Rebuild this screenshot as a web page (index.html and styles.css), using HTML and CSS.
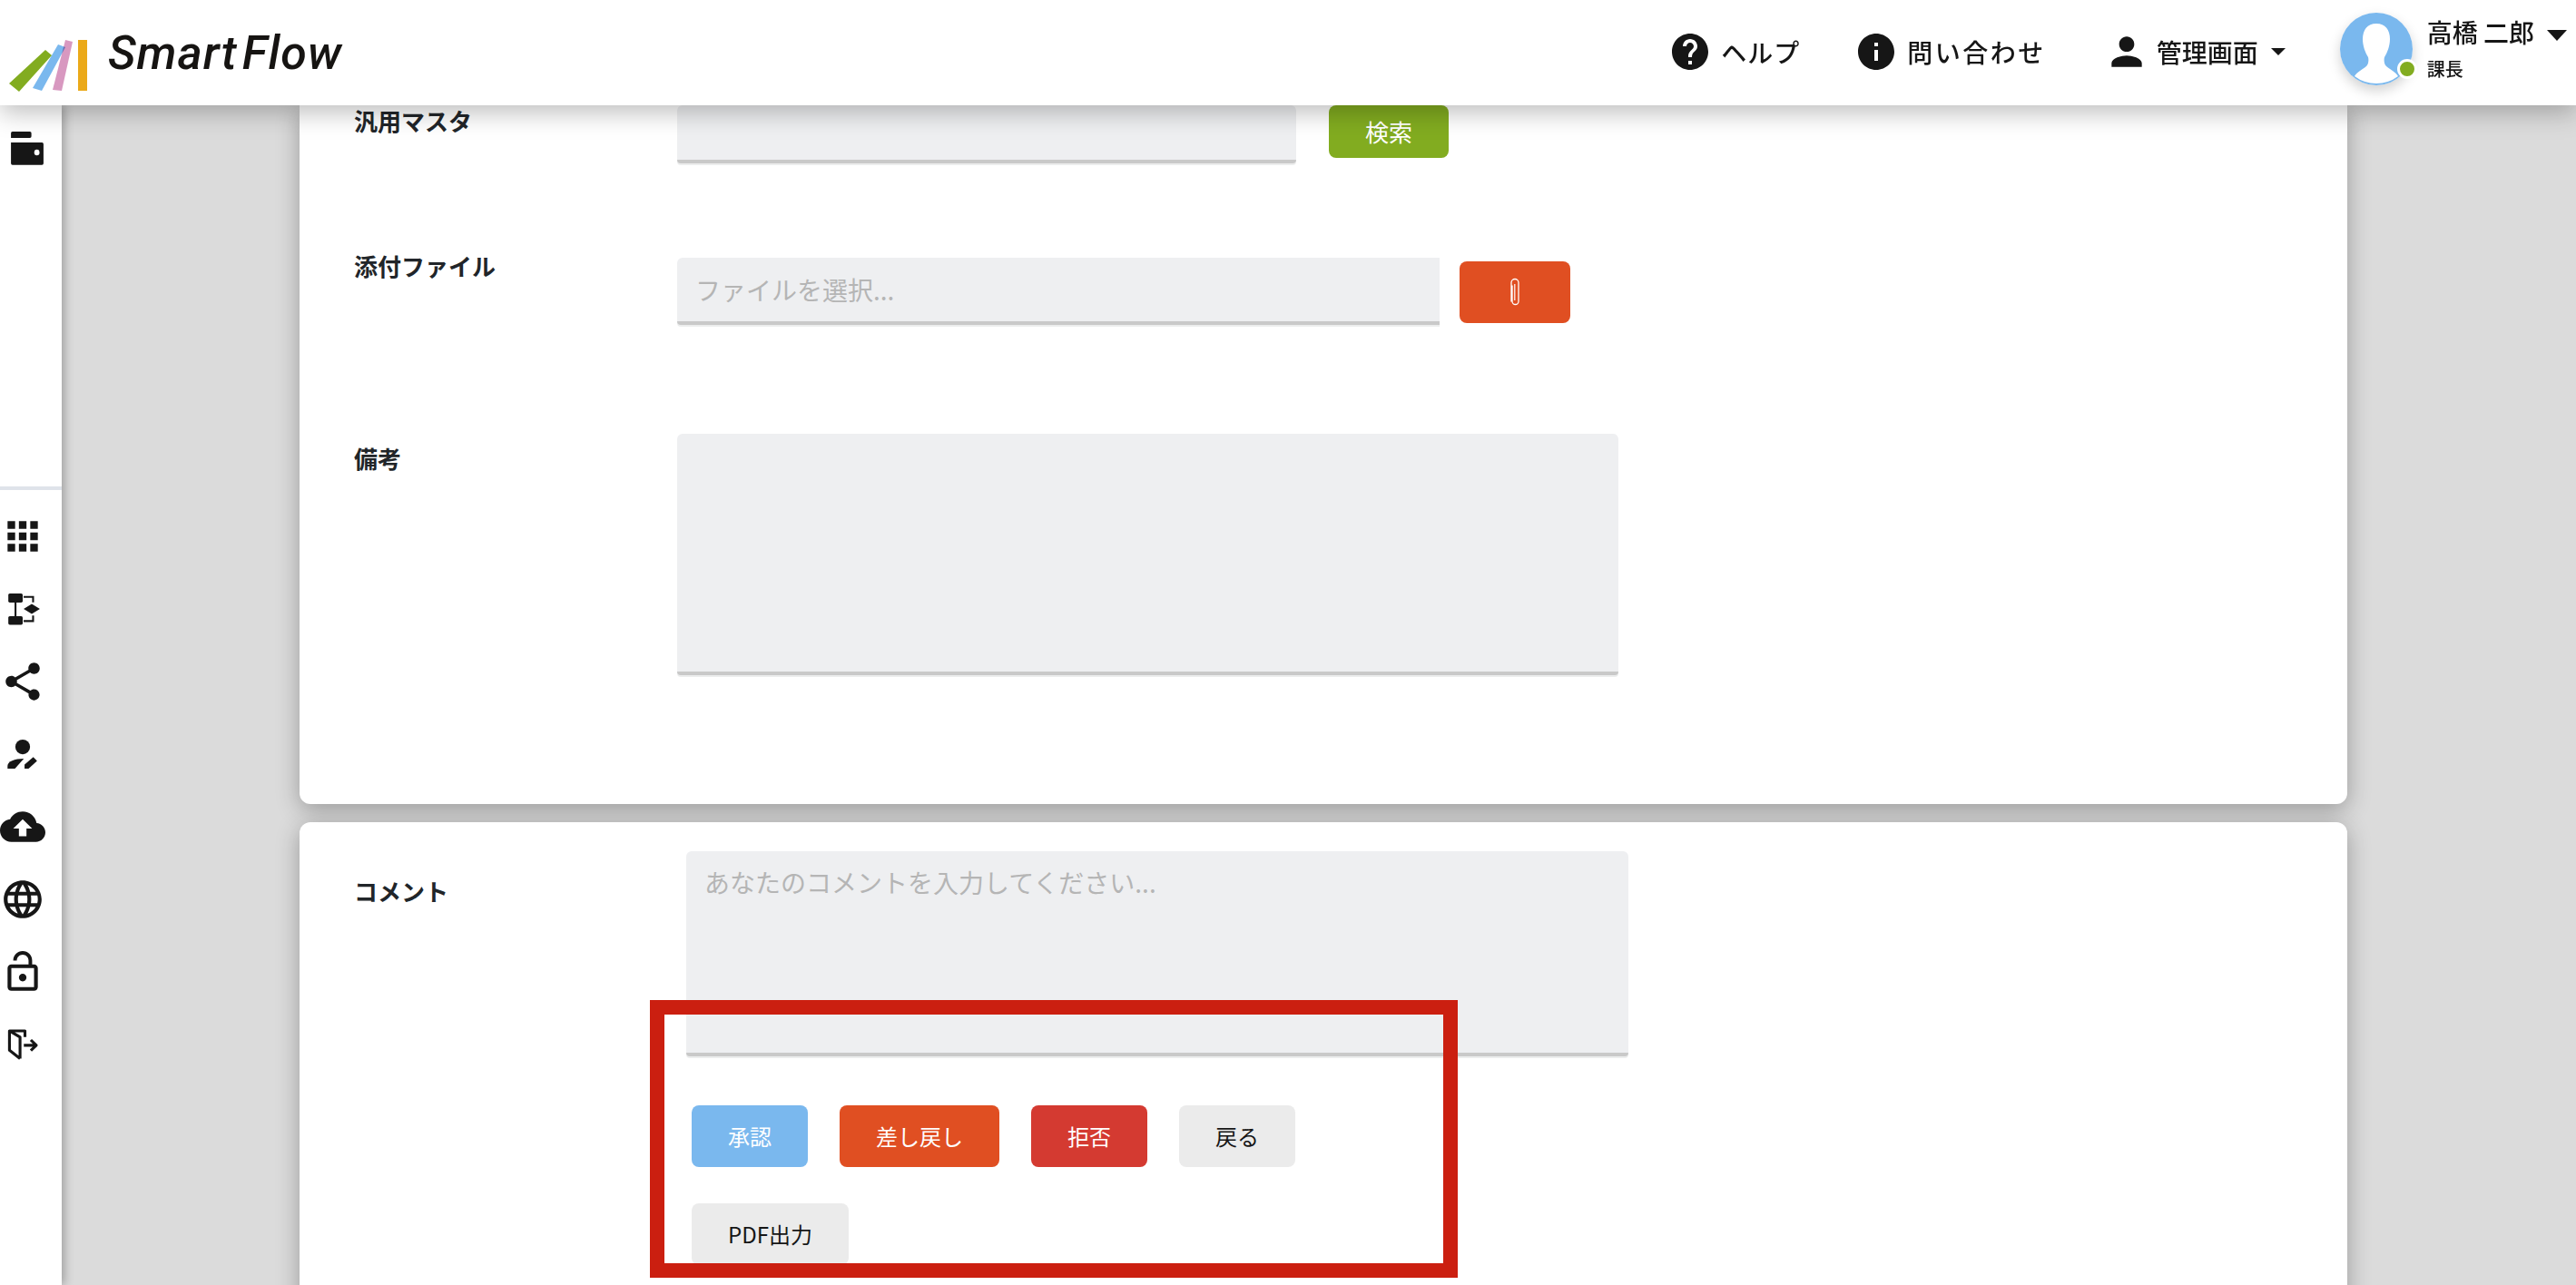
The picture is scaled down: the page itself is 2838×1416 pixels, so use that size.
FILE: index.html
```html
<!DOCTYPE html>
<html lang="en">
<head>
    <meta charset="UTF-8">
    <meta name="viewport" content="width=device-width, initial-scale=1.0">
    <title>SmartFlow</title>
    <link rel="stylesheet" href="styles.css">
</head>
<body>
    <header class="topbar">
        <div class="brand">
            <svg class="brand-mark" viewBox="0 0 104 90">
                <path class="bar" fill="#eba919" d="M86 24h10v56H86z"/>
                <path class="bar" fill="#d898c0" d="M72 24l8 2-12 54-10-1z"/>
                <path class="bar" fill="#7ab8ee" d="M64 29l8 3-26 48-10-3z"/>
                <path class="bar" fill="#82ac20" d="M50 35l7 6-36 40-11-9z"/>
            </svg>
            <span class="brand-name">Smart<span class="brand-gap">Flow</span></span>
        </div>
        <nav class="topnav">
            <a class="nav-item nav-help">
                <svg class="nav-icon" viewBox="0 0 24 24"><path d="M12 2C6.48 2 2 6.48 2 12s4.48 10 10 10 10-4.48 10-10S17.52 2 12 2zm1 17h-2v-2h2v2zm2.07-7.75l-.9.92C13.45 12.9 13 13.5 13 15h-2v-.5c0-1.1.45-2.1 1.17-2.83l1.24-1.26c.37-.36.59-.86.59-1.41 0-1.1-.9-2-2-2s-2 .9-2 2H8c0-2.21 1.79-4 4-4s4 1.79 4 4c0 .88-.36 1.68-.93 2.25z"/></svg>
                ヘルプ
            </a>
            <a class="nav-item nav-contact">
                <svg class="nav-icon" viewBox="0 0 24 24"><path d="M12 2C6.48 2 2 6.48 2 12s4.48 10 10 10 10-4.48 10-10S17.52 2 12 2zm1 15h-2v-6h2v6zm0-8h-2V7h2v2z"/></svg>
                問い合わせ
            </a>
            <a class="nav-item nav-admin">
                <svg class="nav-icon" viewBox="0 0 24 24"><path d="M12 12c2.21 0 4-1.79 4-4s-1.79-4-4-4-4 1.79-4 4 1.79 4 4 4zm0 2c-2.67 0-8 1.34-8 4v2h16v-2c0-2.66-5.33-4-8-4z"/></svg>
                管理画面
                <span class="caret"></span>
            </a>
            <div class="profile">
                <div class="avatar">
                    <svg viewBox="0 0 80 80"><circle cx="40" cy="40" r="40" fill="#7ab8ee"/><path fill="#fff" d="M40 12c-10 0-15 7-15 17 0 8 3 15 6 20 1 4 0 8-2 10-5 4-10 6-13 11a40 40 0 0 0 48 0c-3-5-8-7-13-11-2-2-3-6-2-10 3-5 6-12 6-20 0-10-5-17-15-17z"/></svg>
                    <span class="status"></span>
                </div>
                <div class="who">
                    <div class="who-name">高橋 二郎<span class="caret caret-large"></span></div>
                    <div class="who-role">課長</div>
                </div>
            </div>
        </nav>
    </header>

    <div class="main">
        <aside class="sidebar">
            <svg class="side-icon wallet" viewBox="0 0 24 24"><path d="M6.6 3.4h9.2a.8.8 0 0 1 .8.8v1.7a.8.8 0 0 1-.8.8H5.8V4.2a.8.8 0 0 1 .8-.8zM5.8 9.1h16.4a.8.8 0 0 1 .8.8v10.3a.8.8 0 0 1-.8.8H6.6a.8.8 0 0 1-.8-.8z"/><ellipse cx="19.5" cy="14.4" rx="1.4" ry="1.6" fill="#fff"/></svg>
            <div class="side-rule"></div>
            <div class="side-list">
                <svg class="side-icon" viewBox="0 0 24 24"><path d="M4 8h4V4H4v4zm6 12h4v-4h-4v4zm-6 0h4v-4H4v4zm0-6h4v-4H4v4zm6 0h4v-4h-4v4zm6-10v4h4V4h-4zm-6 4h4V4h-4v4zm6 6h4v-4h-4v4zm0 6h4v-4h-4v4z"/></svg>
                <svg class="side-icon" viewBox="0 0 24 24"><rect x="4.4" y="3.8" width="7.6" height="4.8" rx=".8"/><rect x="4.4" y="15.8" width="7.6" height="4.6" rx=".8"/><path d="M7.7 8.6h1v7.2h-1zM12.5 12l4.3-2.6 4.3 2.6-4.3 2.6z"/><path d="M12.5 5.6h5v2.9M12.5 18.4h5v-2.9" fill="none" stroke="#161616"/></svg>
                <svg class="side-icon" viewBox="0 0 24 24"><path d="M18 16.08c-.76 0-1.44.3-1.96.77L8.91 12.7c.05-.23.09-.46.09-.7s-.04-.47-.09-.7l7.05-4.11c.54.5 1.25.81 2.04.81 1.66 0 3-1.34 3-3s-1.34-3-3-3-3 1.34-3 3c0 .24.04.47.09.7L8.04 9.81C7.5 9.31 6.79 9 6 9c-1.66 0-3 1.34-3 3s1.34 3 3 3c.79 0 1.5-.31 2.04-.81l7.12 4.16c-.05.21-.08.43-.08.65 0 1.61 1.31 2.92 2.92 2.92s2.92-1.31 2.92-2.92-1.31-2.92-2.92-2.92z"/></svg>
                <svg class="side-icon" viewBox="0 0 24 24"><circle cx="12" cy="8.2" r="3.9"/><path d="M4 19.7v-1.5c0-2.3 3.6-3.8 8.6-3.8l-4.7 5.3z"/><path d="M13 19.7v-2.2l4.6-3.9 2 2-4.5 4.1z"/></svg>
                <svg class="side-icon" viewBox="0 0 24 24"><path d="M19.35 10.04C18.67 6.59 15.64 4 12 4 9.11 4 6.6 5.64 5.35 8.04 2.34 8.36 0 10.91 0 14c0 3.31 2.69 6 6 6h13c2.76 0 5-2.24 5-5 0-2.64-2.05-4.78-4.65-4.96zM14 13v4h-4v-4H7l5-5 5 5h-3z"/></svg>
                <svg class="side-icon" viewBox="0 0 24 24"><path d="M11.99 2C6.47 2 2 6.48 2 12s4.47 10 9.99 10C17.52 22 22 17.52 22 12S17.52 2 11.99 2zm6.93 6h-2.95c-.32-1.25-.78-2.45-1.38-3.56 1.84.63 3.37 1.91 4.33 3.56zM12 4.04c.83 1.2 1.48 2.53 1.91 3.96h-3.82c.43-1.43 1.08-2.76 1.91-3.96zM4.26 14C4.1 13.36 4 12.69 4 12s.1-1.36.26-2h3.38c-.08.66-.14 1.32-.14 2 0 .68.06 1.34.14 2H4.26zm.82 2h2.95c.32 1.25.78 2.45 1.38 3.56-1.84-.63-3.37-1.9-4.33-3.56zm2.95-8H5.08c.96-1.66 2.49-2.93 4.33-3.56C8.81 5.55 8.35 6.75 8.03 8zM12 19.96c-.83-1.2-1.48-2.53-1.91-3.96h3.82c-.43 1.43-1.08 2.76-1.91 3.96zM14.34 14H9.66c-.09-.66-.16-1.32-.16-2 0-.68.07-1.35.16-2h4.68c.09.65.16 1.32.16 2 0 .68-.07 1.34-.16 2zm.25 5.56c.6-1.11 1.06-2.31 1.38-3.56h2.95c-.96 1.65-2.49 2.93-4.33 3.56zM16.36 14c.08-.66.14-1.32.14-2 0-.68-.06-1.34-.14-2h3.38c.16.64.26 1.31.26 2s-.1 1.36-.26 2h-3.38z"/></svg>
                <svg class="side-icon" viewBox="0 0 24 24"><path d="M12 17c1.1 0 2-.9 2-2s-.9-2-2-2-2 .9-2 2 .9 2 2 2zm6-9h-1V6c0-2.76-2.24-5-5-5S7 3.24 7 6h1.9c0-1.71 1.39-3.1 3.1-3.1 1.71 0 3.1 1.39 3.1 3.1v2H6c-1.1 0-2 .9-2 2v10c0 1.1.9 2 2 2h12c1.1 0 2-.9 2-2V10c0-1.1-.9-2-2-2zm0 12H6V10h12v10z"/></svg>
                <svg class="side-icon" viewBox="0 0 24 24"><path d="M10.6 19.4L5 15V4.8h8.2V8M5.2 4.9l5.4 3.2v11.3M12.6 12.4h6.4M16.3 9.6l2.9 2.8-2.9 2.8" fill="none" stroke="#161616" stroke-width="1.5" stroke-linejoin="round"/></svg>
            </div>
        </aside>

        <main class="content">
            <section class="card card-form">
                <div class="row row-master">
                    <label class="field-label">汎用マスタ</label>
                    <div class="field-line">
                        <input class="text-field master-field" type="text">
                        <button class="btn btn-search">検索</button>
                    </div>
                </div>
                <div class="row row-file">
                    <label class="field-label">添付ファイル</label>
                    <div class="field-line">
                        <input class="text-field file-field" type="text" placeholder="ファイルを選択...">
                        <button class="btn btn-clip">
                            <svg viewBox="0 0 16 34" width="16" height="34"><path d="M4.5 9v17.5a3.5 3.5 0 0 0 7 0V6a4 4 0 0 0-8 0v21" fill="none" stroke="#fff" stroke-width="1.3" transform="translate(.5 .5)"/><path d="M7.8 8v18" stroke="#fff" stroke-width="1.2"/></svg>
                        </button>
                    </div>
                </div>
                <div class="row row-note">
                    <label class="field-label">備考</label>
                    <textarea class="text-field note-field"></textarea>
                </div>
            </section>

            <section class="card card-comment">
                <div class="row-comment">
                    <label class="field-label">コメント</label>
                    <div class="comment-body">
                        <textarea class="text-field comment-field" placeholder="あなたのコメントを入力してください..."></textarea>
                        <div class="actions">
                            <button class="btn btn-blue">承認</button>
                            <button class="btn btn-orange">差し戻し</button>
                            <button class="btn btn-red">拒否</button>
                            <button class="btn btn-grey">戻る</button>
                            <button class="btn btn-grey">PDF出力</button>
                        </div>
                    </div>
                </div>
            </section>
        </main>
    </div>

    <!-- annotation drawn over the screen -->
    <div class="callout"></div>
</body>
</html>
```

FILE: styles.css
```css
* {
    box-sizing: border-box;
}

html, body {
    margin: 0;
    height: 1416px;
    overflow: hidden;
}

body {
    position: relative;
    background: #dbdbdb;
    color: #161616;
    font-family: "Noto Sans CJK JP", "Noto Sans", sans-serif;
}

/* top bar */
.topbar {
    position: relative;
    z-index: 3;
    display: flex;
    align-items: center;
    justify-content: space-between;
    height: 116px;
    background: #fff;
    box-shadow: 0 8px 26px rgba(0, 0, 0, .26);
}

.brand {
    display: flex;
    align-items: center;
    height: 100%;
}

.brand-mark {
    width: 104px;
    height: 90px;
    margin-top: 14px;
    flex-shrink: 0;
}

.bar {
    stroke-linejoin: round;
    mix-blend-mode: multiply;
}

.brand-name {
    margin-left: 15px;
    font-family: "Roboto", sans-serif;
    font-size: 52px;
    font-style: italic;
    font-weight: 500;
    letter-spacing: 1px;
    color: #161412;
}

.brand-gap {
    margin-left: 5px;
}

.topnav {
    display: flex;
    align-items: center;
    height: 100%;
}

.nav-item {
    display: flex;
    align-items: center;
    font-size: 28px;
    font-weight: 500;
    letter-spacing: 1px;
    line-height: 1;
    margin-top: -2px;
}

.nav-icon {
    width: 48px;
    height: 48px;
    margin-right: 10px;
    fill: #161616;
}

.nav-help {
    margin-right: 60px;
}

.nav-contact {
    margin-right: 64px;
    letter-spacing: 2.5px;
}

.nav-admin {
    letter-spacing: 0;
    margin-right: 60px;
}

.nav-admin .nav-icon {
    width: 50px;
    height: 50px;
    margin-right: 8px;
}

.caret {
    width: 0;
    height: 0;
    margin-left: 14px;
    border-left: 8px solid transparent;
    border-right: 8px solid transparent;
    border-top: 8px solid #161616;
}

.caret-large {
    display: inline-block;
    margin-left: 14px;
    vertical-align: middle;
    border-left-width: 11px;
    border-right-width: 11px;
    border-top-width: 12px;
}

.profile {
    display: flex;
    align-items: flex-start;
    height: 100%;
    padding-right: 10px;
}

.avatar {
    position: relative;
    width: 80px;
    height: 80px;
    margin-top: 14px;
    margin-right: 16px;
    border-radius: 50%;
    box-shadow: 0 6px 14px rgba(0, 0, 0, .18);
}

.avatar svg {
    display: block;
}

.status {
    position: absolute;
    left: 63px;
    top: 51px;
    width: 22px;
    height: 22px;
    border: 3px solid #fff;
    border-radius: 50%;
    background: #82ac20;
}

.who-name {
    margin-top: 14px;
    font-size: 28px;
    font-weight: 500;
    line-height: 42px;
    white-space: nowrap;
}

.who-role {
    margin-top: 5px;
    font-size: 20px;
    font-weight: 500;
    line-height: 30px;
}

/* left rail */
.main {
    display: flex;
    height: 1300px;
}

.sidebar {
    position: relative;
    z-index: 2;
    width: 68px;
    flex-shrink: 0;
    padding-top: 22px;
    background: #fff;
    box-shadow: 3px 0 10px rgba(0, 0, 0, .28);
}

.side-icon {
    display: block;
    width: 50px;
    height: 50px;
    fill: #161616;
}

.side-rule {
    height: 4px;
    margin-top: 348px;
    background: #dfe3ea;
}

.side-list {
    display: flex;
    flex-direction: column;
    gap: 30px;
    margin-top: 26px;
}

/* cards */
.content {
    flex: 1;
    min-width: 0;
    height: 100%;
    overflow: hidden;
    padding-left: 262px;
}

.card {
    width: 2256px;
    padding-left: 60px;
    background: #fff;
    border-radius: 12px;
    box-shadow: 0 6px 26px rgba(0, 0, 0, .3);
}

.card-form {
    height: 770px;
    border-radius: 0 0 12px 12px;
}

.card-comment {
    margin-top: 20px;
    height: 600px;
    padding-top: 32px;
}

.row {
    display: grid;
    grid-template-columns: 356px 1fr;
}

.row-master {
    height: 168px;
}

.row-file {
    height: 194px;
}

.row-comment {
    display: grid;
    grid-template-columns: 366px 1fr;
}

.field-label {
    font-size: 26px;
    font-weight: 700;
    line-height: 38px;
    color: #212529;
}

.row-master .field-label {
    margin-top: -2px;
}

.row-file .field-label {
    margin-top: -10px;
}

.row-note .field-label {
    margin-top: 8px;
}

.row-comment .field-label {
    margin-top: 25px;
}

.field-line {
    display: flex;
    align-items: flex-start;
}

.text-field {
    display: block;
    padding: 14px 20px;
    border: 0;
    border-bottom: 4px solid #c9c9c9;
    border-radius: 6px 6px 4px 4px;
    outline: 0;
    resize: none;
    background: #eeeff1;
    box-shadow: 0 2px 0 #eceded;
    font-family: inherit;
    font-size: 28px;
    color: #161616;
}

.text-field::placeholder {
    color: #b5b5b5;
    opacity: 1;
}

.master-field {
    width: 682px;
    height: 64px;
}

.file-field {
    width: 840px;
    height: 74px;
    border-radius: 6px 0 0 4px;
}

.note-field {
    width: 1037px;
    height: 266px;
}

.comment-field {
    width: 1038px;
    height: 226px;
}

/* buttons */
.btn {
    height: 68px;
    padding: 0 40px;
    border: 0;
    border-radius: 8px;
    font-family: inherit;
    font-size: 24px;
    line-height: 1;
    color: #fff;
}

.btn-search {
    height: 58px;
    margin-left: 36px;
    padding: 0;
    width: 132px;
    font-size: 26px;
    background: #82ac20;
}

.btn-clip {
    display: flex;
    align-items: center;
    justify-content: center;
    width: 122px;
    margin: 4px 0 0 22px;
    padding: 0;
    background: #e04f22;
}

.actions {
    display: flex;
    flex-wrap: wrap;
    gap: 40px 35px;
    width: 760px;
    margin: 54px 0 0 6px;
}

.btn-blue {
    background: #7ab8ee;
}

.btn-orange {
    background: #e04f22;
}

.btn-red {
    background: #d43a31;
}

.btn-grey {
    background: #ebebeb;
    color: #161616;
}

.callout {
    position: absolute;
    left: 716px;
    top: 1102px;
    width: 890px;
    height: 306px;
    border: 16px solid #cb1f10;
    z-index: 4;
}
```
